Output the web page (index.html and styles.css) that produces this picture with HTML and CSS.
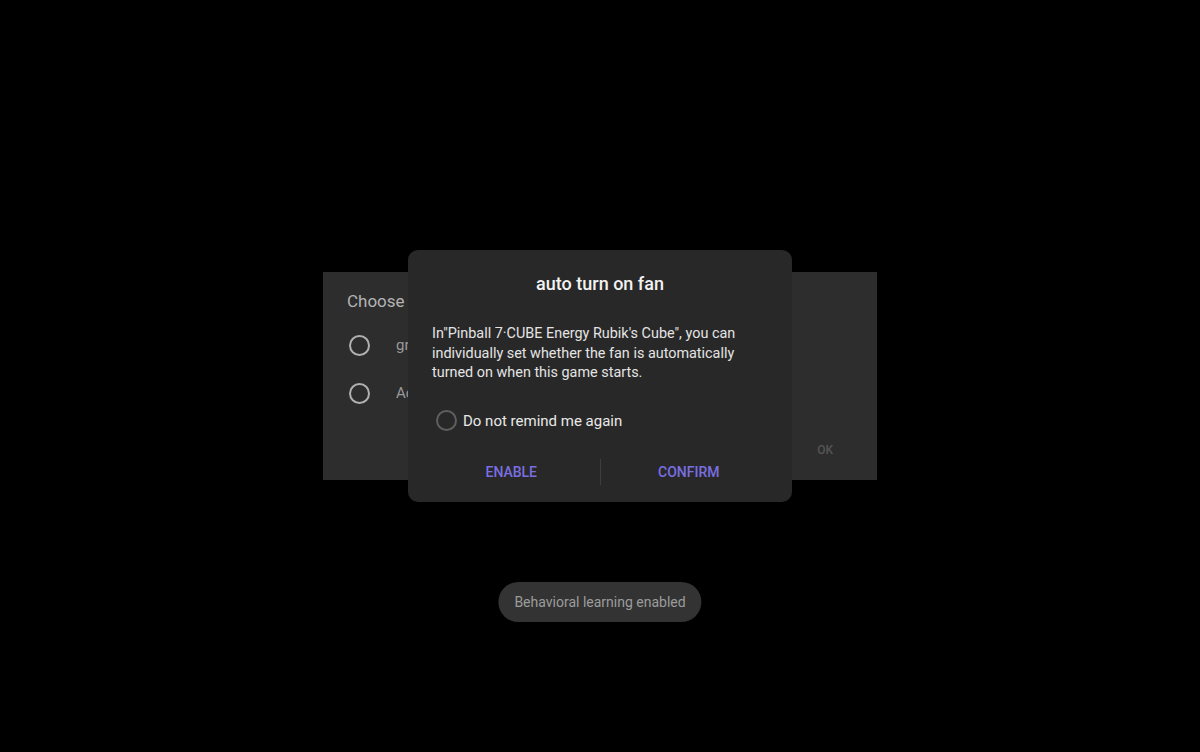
FILE: index.html
```html
<!DOCTYPE html>
<html>
<head>
<meta charset="utf-8">
<link rel="stylesheet" href="styles.css">
</head>
<body>
<div class="screen">
  <div class="stage">
    <div class="back-dialog">
      <div class="back-title">Choose</div>
      <div class="back-option"><span class="radio"></span><span class="back-label">gray</span></div>
      <div class="back-option"><span class="radio"></span><span class="back-label">Act</span></div>
      <div class="back-actions"><span class="back-ok">OK</span></div>
    </div>
    <div class="dialog">
      <div class="dialog-title">auto turn on fan</div>
      <div class="dialog-body">In"Pinball 7·CUBE Energy Rubik's Cube", you can individually set whether the fan is automatically turned on when this game starts.</div>
      <div class="check-row"><span class="check"></span><span class="check-label">Do not remind me again</span></div>
      <div class="actions">
        <span class="action">ENABLE</span>
        <span class="divider"></span>
        <span class="action">CONFIRM</span>
      </div>
    </div>
  </div>
  <div class="toast">Behavioral learning enabled</div>
</div>
</body>
</html>
```

FILE: styles.css
```css
* { box-sizing: border-box; }
html, body {
  margin: 0;
  padding: 0;
  background: #000;
  font-family: Roboto, "Noto Sans", sans-serif;
}
.screen {
  position: relative;
  width: 1200px;
  height: 752px;
  display: grid;
  place-items: center;
  overflow: hidden;
}
.stage {
  display: grid;
  place-items: center;
}
.back-dialog, .dialog { grid-area: 1 / 1; }

.back-dialog {
  width: 554px;
  height: 208px;
  background: #2d2d2d;
  padding: 19px 24px 0 24px;
  display: flex;
  flex-direction: column;
}
.back-title {
  font-size: 17px;
  color: #b4b4b4;
  line-height: 20px;
  margin-bottom: 10px;
}
.back-option {
  display: flex;
  align-items: center;
  height: 48px;
}
.radio {
  width: 21px;
  height: 21px;
  border: 2px solid #b0b0b0;
  border-radius: 50%;
  margin-left: 2px;
}
.back-label {
  margin-left: 26px;
  font-size: 15px;
  color: #9a9a9a;
}
.back-actions {
  display: flex;
  justify-content: flex-end;
  padding-right: 20px;
  margin-top: 26px;
}
.back-ok {
  font-size: 12px;
  font-weight: 500;
  color: #555;
}

.dialog {
  position: relative;
  width: 384px;
  height: 252px;
  background: #282828;
  border-radius: 10px;
  padding: 22px 24px 10px 24px;
  display: flex;
  flex-direction: column;
}
.dialog-title {
  text-align: center;
  font-size: 18px;
  font-weight: 500;
  line-height: 24px;
  color: #f2f2f2;
}
.dialog-body {
  margin-top: 28px;
  font-size: 14.4px;
  line-height: 19.5px;
  color: #e4e4e4;
}
.check-row {
  margin-top: 26px;
  display: flex;
  align-items: center;
  height: 24px;
  padding-left: 4px;
}
.check {
  width: 21px;
  height: 21px;
  border: 2px solid #5e5e5e;
  border-radius: 50%;
}
.check-label {
  margin-left: 6px;
  font-size: 15px;
  color: #e8e8e8;
}
.actions {
  margin-top: 19px;
  height: 40px;
  display: flex;
  align-items: center;
  margin-left: -9px;
  margin-right: -9px;
}
.action {
  flex: 1;
  text-align: center;
  font-size: 14px;
  font-weight: 500;
  color: #7a6fe2;
}
.divider {
  width: 1px;
  height: 26px;
  background: #3e3e3e;
}

.toast {
  position: absolute;
  left: 50%;
  bottom: 130px;
  transform: translateX(-50%);
  height: 40px;
  padding: 0 16px;
  border-radius: 20px;
  background: #333;
  color: #9c9c9c;
  font-size: 14px;
  line-height: 40px;
  white-space: nowrap;
}
```
